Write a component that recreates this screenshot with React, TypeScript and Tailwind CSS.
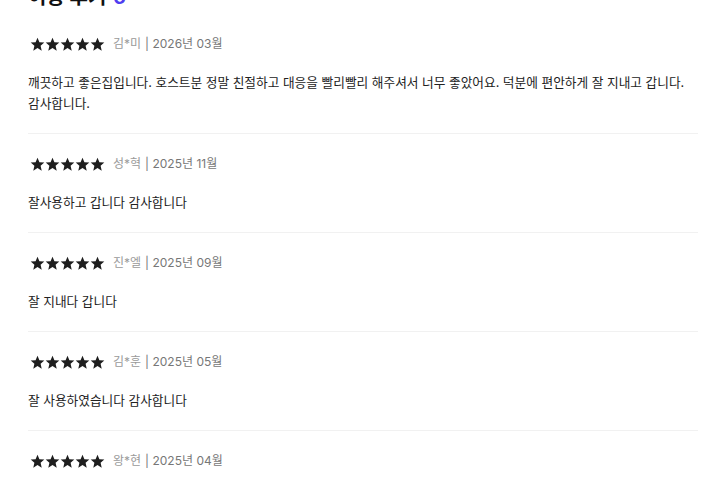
const reviews = [
  {
    name: '김*미',
    date: '2026년 03월',
    text: '깨끗하고 좋은집입니다. 호스트분 정말 친절하고 대응을 빨리빨리 해주셔서 너무 좋았어요. 덕분에 편안하게 잘 지내고 갑니다. 감사합니다.',
  },
  { name: '성*혁', date: '2025년 11월', text: '잘사용하고 갑니다 감사합니다' },
  { name: '진*엘', date: '2025년 09월', text: '잘 지내다 갑니다' },
  { name: '김*훈', date: '2025년 05월', text: '잘 사용하였습니다 감사합니다' },
  { name: '왕*현', date: '2025년 04월', text: '좋은 숙소였습니다 다음에 또 올게요' },
];

function StarIcon() {
  return (
    <svg className="w-[15px] h-[15px] text-[#1e1e1e]" viewBox="1 1 22 22" fill="currentColor">
      <path d="M12 17.27L18.18 21l-1.64-7.03L22 9.24l-7.19-.61L12 2 9.19 8.63 2 9.24l5.46 4.73L5.82 21z" />
    </svg>
  );
}

export default function App() {
  return (
    <div
      className="w-[720px] h-[480px] overflow-hidden bg-white"
      style={{ fontFamily: 'Inter, "Noto Sans CJK KR", sans-serif' }}
    >
      <div className="pl-[28px] w-[698px]">
        {/* Title, scrolled partly out of view */}
        <h2 className="-mt-[17px] h-7 leading-7 text-xl font-bold text-[#111] mb-[3px]">
          이용 후기 <span className="ml-0.5 text-[#4f3ef0]">6</span>
        </h2>

        {reviews.map((r, i) => (
          <div key={i} className="border-b border-[#f1f1f1] pt-5 pb-[19px]">
            <div className="flex items-center h-5">
              <div className="flex items-center ml-[2px]">
                <StarIcon />
                <StarIcon />
                <StarIcon />
                <StarIcon />
                <StarIcon />
              </div>
              <span className="ml-[8px] text-[12px] text-[#9a9a9a]">{r.name}</span>
              <span className="ml-1 text-[12px] text-[#777]">| {r.date}</span>
            </div>
            <p className="mt-[18px] text-[12.7px] leading-[21px] text-[#222] break-keep">{r.text}</p>
          </div>
        ))}
      </div>
    </div>
  );
}
